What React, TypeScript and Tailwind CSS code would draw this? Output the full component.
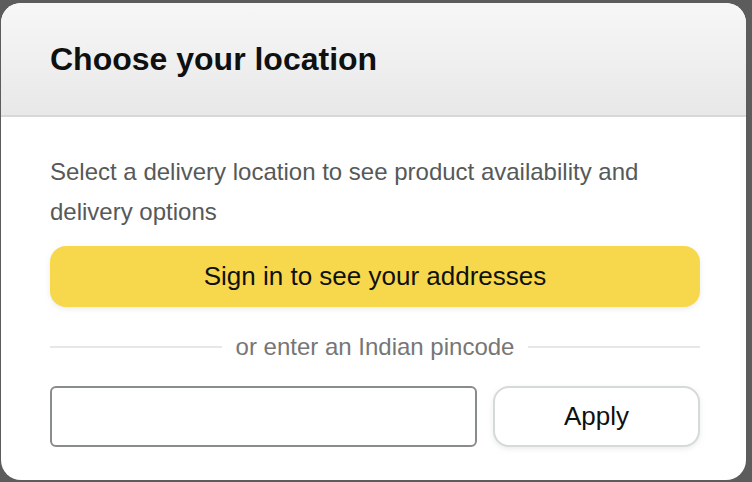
import React from "react";

export default function App() {
  return (
    <div
      className="w-[752px] h-[482px] bg-[#5c5c5c] pt-[3px] pl-[1px] pr-[6px] pb-[2px] overflow-hidden"
      style={{ fontFamily: '"Liberation Sans", Arial, sans-serif' }}
    >
      <div className="w-full h-full bg-white rounded-[20px] overflow-hidden flex flex-col">
        <div className="h-[114px] shrink-0 flex items-center pl-[49px] bg-gradient-to-b from-[#f7f7f7] to-[#e8e8e8] border-b-2 border-[#d5d9d9]">
          <h1 className="text-[32px] font-bold text-[#0f1111] leading-none">Choose your location</h1>
        </div>
        <div className="flex flex-col pl-[49px] pr-[46px] pt-[35px]">
          <p className="text-[24px] leading-[40px] text-[#565959] pr-[40px]">
            Select a delivery location to see product availability and delivery options
          </p>
          <button className="mt-[14px] h-[61px] w-full rounded-[16px] bg-[#f7d84c] text-[26px] text-[#0f1111] shadow-[0_2px_5px_rgba(213,217,217,0.5)]">
            Sign in to see your addresses
          </button>
          <div className="mt-[28px] flex items-center h-[24px]">
            <div className="flex-1 h-[2px] bg-[#e7e7e7]" />
            <span className="px-[14px] text-[24px] text-[#767676] leading-none">or enter an Indian pincode</span>
            <div className="flex-1 h-[2px] bg-[#e7e7e7]" />
          </div>
          <div className="mt-[27px] flex gap-[16px]">
            <input
              type="text"
              className="w-[427px] h-[61px] rounded-[6px] border-2 border-[#888c8c] bg-white outline-none"
            />
            <button className="flex-1 h-[61px] rounded-[16px] border-2 border-[#d5d9d9] bg-white text-[26px] text-[#0f1111] shadow-[0_2px_5px_rgba(213,217,217,0.5)]">
              Apply
            </button>
          </div>
        </div>
      </div>
    </div>
  );
}
